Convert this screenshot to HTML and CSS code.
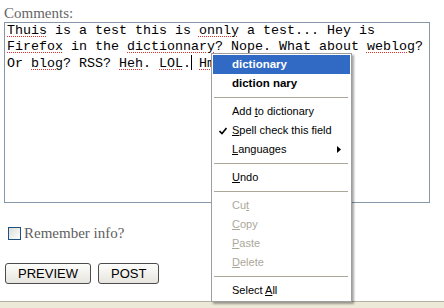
FILE: index.html
```html
<!DOCTYPE html>
<html lang="en">
<head>
  <meta charset="UTF-8" />
  <title>Comments</title>
  <link rel="stylesheet" href="styles.css">
</head>
<body>

<div class="page">
  <form class="comment-form">
    <label class="field-label">Comments:</label>
    <div class="textarea">
      <div class="line"><span class="typo">Thuis</span> is a test this is <span class="typo">onnly</span> a test... Hey is</div>
      <div class="line"><span class="typo">Firefox</span> in the <span class="typo">dictionnary</span>? Nope. What about <span class="typo">weblog</span>?</div>
      <div class="line">Or <span class="typo">blog</span>? RSS? <span class="typo">Heh</span>. <span class="typo">LOL</span>.<span class="caret"></span> <span class="typo">Hmm</span>.</div>
    </div>
    <label class="remember"><span class="checkbox"></span>Remember info?</label>
    <div class="buttons">
      <button type="button">PREVIEW</button>
      <button type="button">POST</button>
    </div>
  </form>
  <div class="statusbar"></div>

  <div class="context-menu">
    <div class="item suggestion active">dictionary</div>
    <div class="item suggestion">diction nary</div>
    <div class="sep"></div>
    <div class="item">Add <u>t</u>o dictionary</div>
    <div class="item">
      <svg class="check" width="8" height="8" viewBox="0 0 8 8"><path d="M0.5 4 L3 6.5 L7.5 1" fill="none" stroke="#000" stroke-width="1.6"/></svg>
      <u>S</u>pell check this field
    </div>
    <div class="item"><u>L</u>anguages
      <svg class="arrow" width="4" height="7" viewBox="0 0 4 7"><path d="M0 0 L4 3.5 L0 7 Z" fill="#000"/></svg>
    </div>
    <div class="sep"></div>
    <div class="item"><u>U</u>ndo</div>
    <div class="sep"></div>
    <div class="item disabled">Cu<u>t</u></div>
    <div class="item disabled"><u>C</u>opy</div>
    <div class="item disabled"><u>P</u>aste</div>
    <div class="item disabled"><u>D</u>elete</div>
    <div class="sep"></div>
    <div class="item">Select <u>A</u>ll</div>
  </div>
</div>

</body>
</html>
```

FILE: styles.css
```css
body {
  margin: 0;
  background: #fff;
}
.page {
  position: relative;
  height: 308px;
  display: flex;
  flex-direction: column;
  overflow: hidden;
}
.comment-form {
  flex: 1;
  padding: 0 4px;
  font-family: "Liberation Serif", serif;
  font-size: 15px;
  color: #666;
}
.field-label {
  display: block;
  padding-top: 4px;
  line-height: 18px;
}
.textarea {
  box-sizing: border-box;
  width: 426px;
  height: 181px;
  border: 1px solid #8597a8;
  padding: 0 2px;
  font-family: "Liberation Mono", monospace;
  font-size: 13.33px;
  line-height: 16px;
  color: #000;
}
.line {
  height: 16px;
  white-space: pre;
}
.typo {
  text-decoration: underline dotted #e03030;
  text-decoration-thickness: 1px;
  text-underline-offset: 2px;
}
.caret {
  display: inline-block;
  width: 1px;
  height: 15px;
  margin-right: -1px;
  background: #000;
  vertical-align: -3px;
}
.remember {
  display: flex;
  align-items: center;
  gap: 3px;
  margin-top: 21px;
  margin-left: 4px;
  line-height: 18px;
  color: #606060;
}
.checkbox {
  box-sizing: border-box;
  width: 13px;
  height: 13px;
  border: 1px solid #1c5180;
  background: linear-gradient(135deg, #dcdcd7, #fff);
}
.buttons {
  display: flex;
  gap: 7px;
  margin-top: 21px;
  margin-left: 1px;
}
.buttons button {
  height: 21px;
  padding: 0 12px;
  margin: 0;
  border: 1px solid #4c4c4c;
  border-radius: 3px;
  background: linear-gradient(#fdfdfb, #e6e5df);
  font-family: "Liberation Sans", sans-serif;
  font-size: 13px;
  color: #000;
}
.statusbar {
  height: 6px;
  border-top: 1px solid #b5b2a5;
  background: #ece9d8;
}
.context-menu {
  position: absolute;
  left: 211px;
  top: 53px;
  width: 141px;
  box-sizing: border-box;
  padding: 1px;
  border: 1px solid #9e9e9e;
  background: #fff;
  box-shadow: 2px 2px 2px rgba(0, 0, 0, 0.35);
  font-family: "Liberation Sans", sans-serif;
  font-size: 11px;
  color: #000;
}
.item {
  position: relative;
  height: 19px;
  line-height: 19px;
  padding-left: 19px;
}
.item u {
  text-underline-offset: 1px;
}
.suggestion {
  font-weight: bold;
  font-size: 11.5px;
}
.active {
  background: #316ac5;
  color: #fff;
}
.disabled {
  color: #aca899;
}
.check {
  position: absolute;
  left: 6px;
  top: 6px;
}
.arrow {
  position: absolute;
  right: 9px;
  top: 6px;
}
.sep {
  height: 1px;
  margin: 4px 2px 4px 1px;
  background: #aca899;
}
```
